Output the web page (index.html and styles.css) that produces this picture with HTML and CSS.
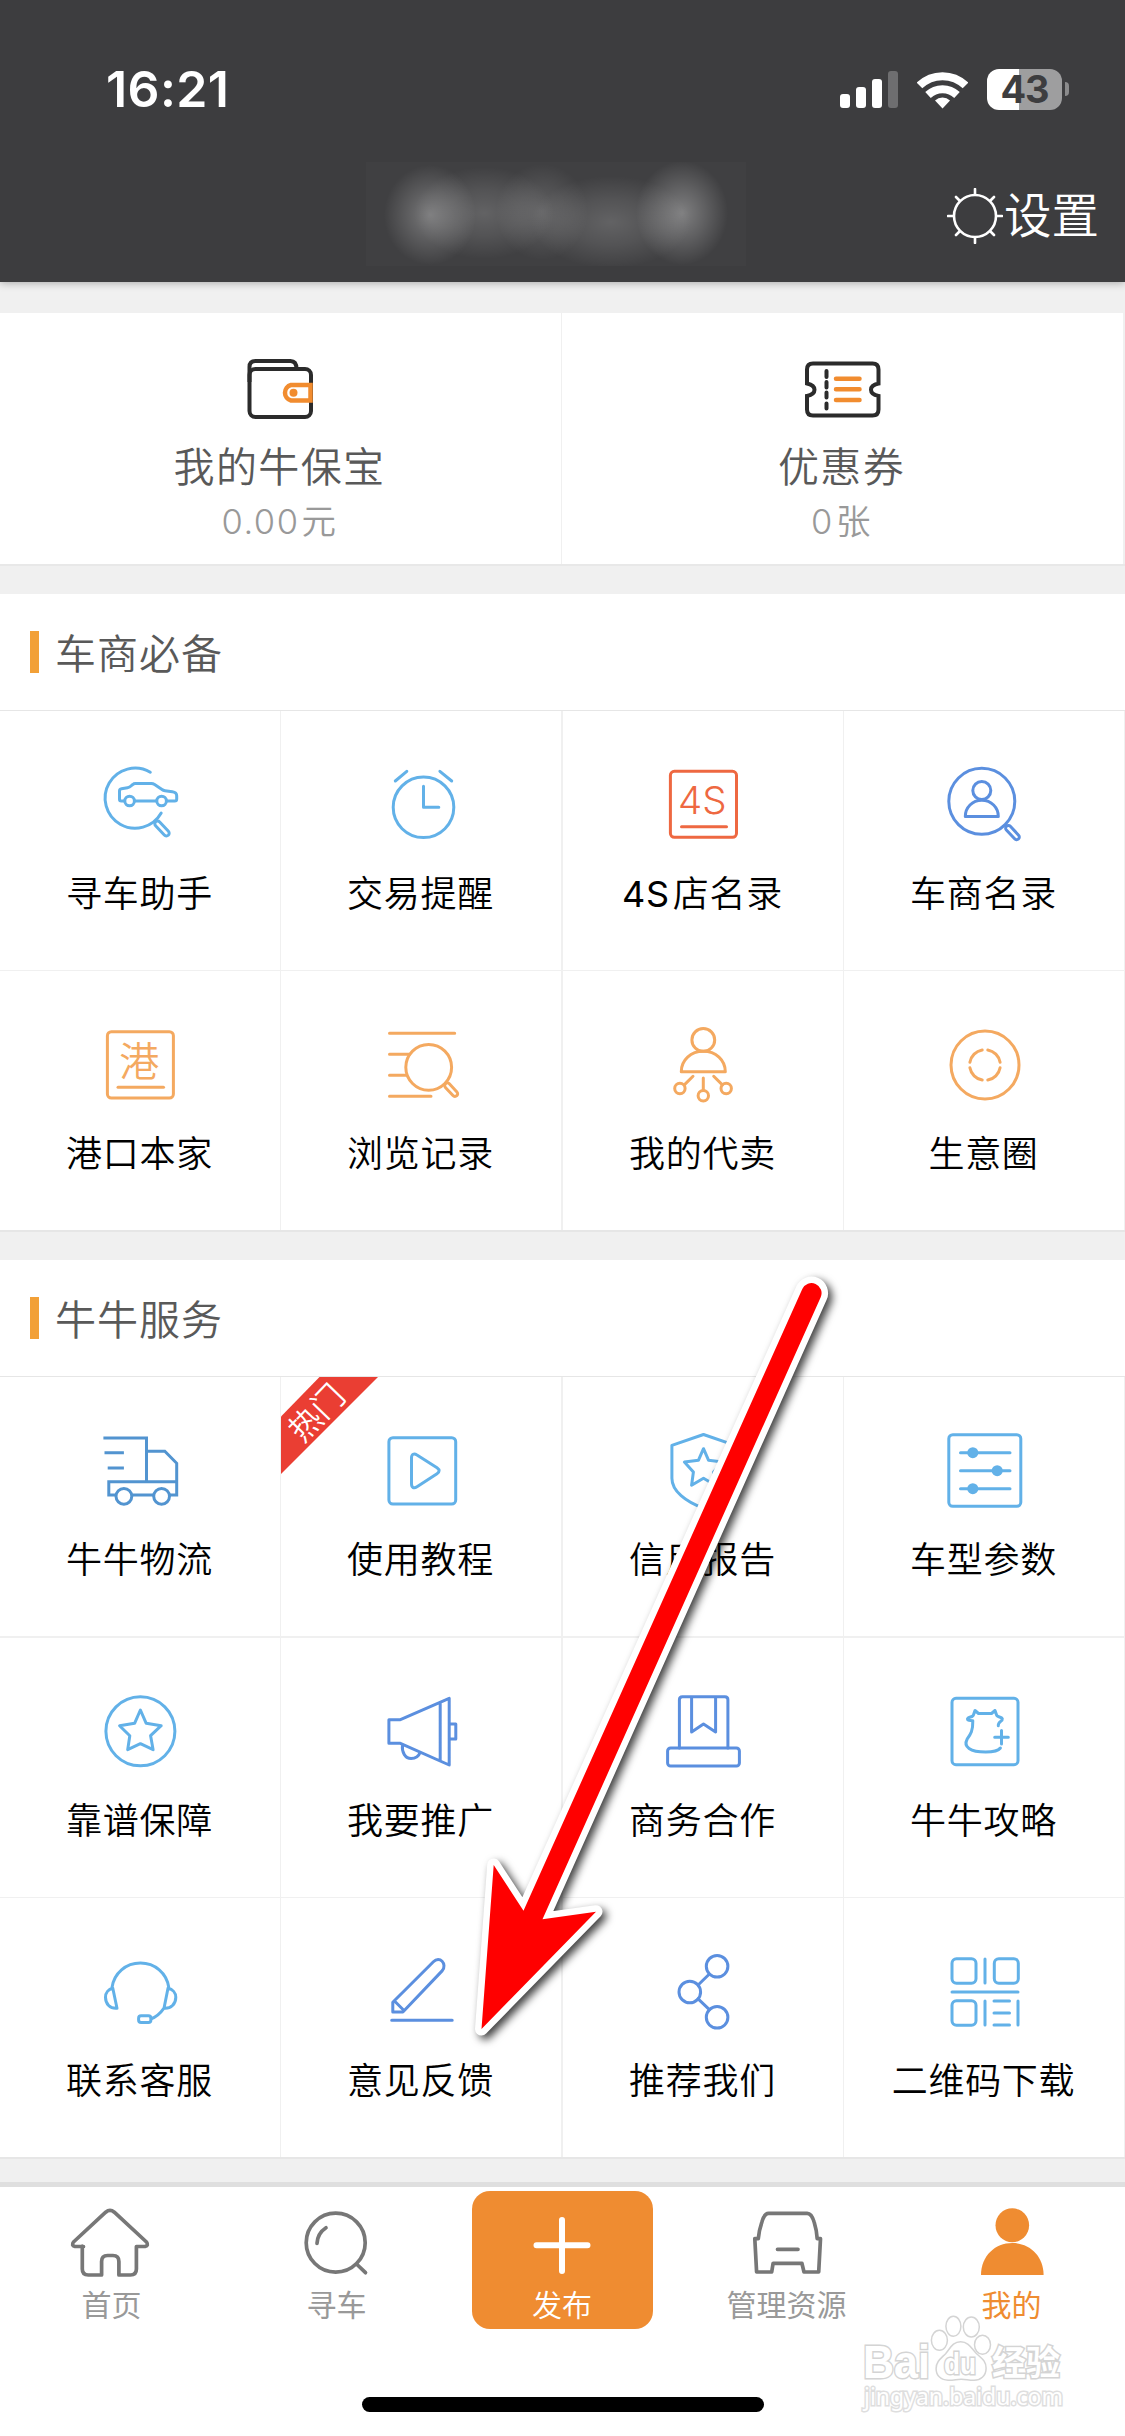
FILE: index.html
```html
<!DOCTYPE html>
<html lang="zh-CN">
<head>
<meta charset="utf-8">
<title>我的</title>
<link rel="stylesheet" href="styles.css">
</head>
<body>
<div class="screen">
  <header class="header">
    <div class="status">
      <div class="time">16:21</div>
      <div class="indicators">
        <svg class="signal" viewBox="840 68 58 41"><g fill="#fff"><rect x="840" y="93" width="10" height="14" rx="3"/><rect x="856" y="86" width="10" height="21" rx="3"/><rect x="872" y="78" width="10" height="29" rx="3"/></g><rect x="888" y="70" width="10" height="37" rx="3" fill="#6e6e70"/></svg>
        <svg class="wifi" viewBox="917 68 51 41"><g fill="none" stroke="#fff" stroke-width="8"><path d="M919.5 84.5a33 33 0 0 1 46 0"/><path d="M928 94a21 21 0 0 1 29 0"/></g><path d="M935 99.5a11 11 0 0 1 15 0L942.500 107.500z" fill="#fff"/></svg>
        <div class="battery"><div class="battery-body">43</div><div class="battery-cap"></div></div>
      </div>
    </div>
    <div class="titlebar">
      <div class="masked-title"></div>
      <div class="settings">
        <svg class="gear" viewBox="947 188 56 56"><g fill="none" stroke="#fff" stroke-width="2.600" stroke-linecap="round"><circle cx="975" cy="216" r="21"/><path d="M975 194v-5M975 238v5M953 216h-5M997 216h5M990.500 200.500l3.500-3.500M959.500 200.500l-3.500-3.500M990.500 231.500l3.500 3.500M959.500 231.500l-3.500 3.500"/></g></svg>
        <span>设置</span>
      </div>
    </div>
  </header>

  <main class="content">
    <section class="assets">
      <div class="asset">
        <svg class="asset-icon" viewBox="241 350 80 80"><g fill="none" stroke="#2b2b2b" stroke-width="4"><path d="M249.500 382V367q0-6 6-6h35q6 0 6 8"/><rect x="249.500" y="369" width="61.500" height="48" rx="6"/></g><path d="M310.500 385H291a8 8 0 0 0 0 15.500h19.500z" fill="#fff" stroke="#f18c2f" stroke-width="4.500"/><circle cx="293.500" cy="392.700" r="4" fill="#f18c2f"/></svg>
        <div class="asset-name">我的牛保宝</div>
        <div class="asset-value"><span>0.00</span>元</div>
      </div>
      <div class="asset">
        <svg class="asset-icon" viewBox="803 350 80 80"><path d="M807 383.500V369.500q0-6 6-6H872.500q6 0 6 6V383.500q-7.500 1.500-7.500 6.200t7.500 6.200V409.500q0 6-6 6H813q-6 0-6-6V396q7.500-1.500 7.500-6.200t-7.500-6.300z" fill="none" stroke="#2b2b2b" stroke-width="4"/><path d="M826.500 371v6M826.500 382v5.500M826.500 392.500v5M826.500 403.500v5" stroke="#2b2b2b" stroke-width="4" stroke-linecap="round"/><path d="M836 378.700h23.500M836 389.300h23.500M836 400h23.500" stroke="#f18c2f" stroke-width="4.500" stroke-linecap="round"/></svg>
        <div class="asset-name">优惠券</div>
        <div class="asset-value"><span>0</span>张</div>
      </div>
    </section>

    <section class="panel">
      <h2 class="panel-title"><span>车商必备</span></h2>
      <div class="grid grid-essentials">
        <div class="cell"><svg class="icon sky" viewBox="90 45 100 100"><path d="M150.300 61.300A30 30 0 1 0 161.200 102"/><path d="M124.500 90h-3.200q-1.800 0-1.800-1.800V80q0-2 2-2.300l6-1q2.200-.4 3.800-2l1.500-1.200q1-1 2.500-1h16q1.800 0 3.300 1l7.400 5q1.200 1 3 1.200l7.300 1q4.400.6 4.400 4V88q0 2-2 2h-7.500M134.800 90h21.600"/><circle cx="129.600" cy="90" r="4.800"/><circle cx="161.600" cy="90" r="4.800"/><rect x="-9.200" y="-2.800" width="18.400" height="5.600" rx="2.800" transform="translate(162 117.500)rotate(47)"/></svg><span class="label">寻车助手</span></div>
        <div class="cell"><svg class="icon sky" viewBox="90 45 100 100"><circle cx="142.500" cy="96.300" r="30.300"/><path d="M142.500 75.300v21h15.300M114.300 70l11.500-9.700M158.900 60.300l11.800 9.700"/></svg><span class="label">交易提醒</span></div>
        <div class="cell"><svg class="icon red" viewBox="90 45 100 100"><rect x="107.400" y="60.300" width="66.100" height="66" rx="4"/><path d="M118.500 115.700h45"/><text class="glyph latin" x="115" y="103" textLength="48.500" lengthAdjust="spacingAndGlyphs">4S</text></svg><span class="label"><span class="label-latin">4S</span>店名录</span></div>
        <div class="cell"><svg class="icon blue" viewBox="90 45 100 100"><circle cx="137.800" cy="90.300" r="33"/><circle cx="137.800" cy="79.500" r="9"/><path d="M121.300 105.500c0-9 7-16.200 16.500-16.200s16.500 7.200 16.500 16.200z"/><rect x="-8.500" y="-2.700" width="17.500" height="5.400" rx="2.700" transform="translate(168.300 121.400)rotate(47)"/></svg><span class="label">车商名录</span></div>
        <div class="cell"><svg class="icon amber" viewBox="90 45 100 100"><rect x="107.400" y="60.700" width="66" height="66.300" rx="4"/><path d="M118 116.300h45.500"/><text class="glyph" x="119.300" y="104.500">港</text></svg><span class="label">港口本家</span></div>
        <div class="cell"><svg class="icon amber" viewBox="90 45 100 100"><path d="M108.500 62.300h65.200M108.500 83.300h20M108.500 104.300h17.200M108.500 125.300h41.500"/><circle cx="147.700" cy="96.300" r="22.900"/><rect x="-8" y="-2.700" width="16.500" height="5.400" rx="2.700" transform="translate(170 118.500)rotate(47)"/></svg><span class="label">浏览记录</span></div>
        <div class="cell"><svg class="icon amber" viewBox="90 45 100 100"><circle cx="140.300" cy="68.900" r="11.400"/><path d="M118.300 100.700c0-11.500 9.500-20.400 22-20.400s22 8.900 22 20.400zM130 105.300l-8.700 8.600M140.300 107v12M150.700 105.300l8.700 8.600"/><circle cx="116.900" cy="117.500" r="5.200"/><circle cx="140.300" cy="124.700" r="5.200"/><circle cx="163.200" cy="117.500" r="5.200"/></svg><span class="label">我的代卖</span></div>
        <div class="cell"><svg class="icon amber" viewBox="90 45 100 100"><circle cx="141" cy="94" r="34"/><path d="M143.800 78.900a15.300 15.300 0 0 1 12.300 12.300M156.100 96.800a15.300 15.300 0 0 1-12.300 12.300M138.200 109.100a15.300 15.300 0 0 1-12.300-12.300M125.900 91.200a15.300 15.300 0 0 1 12.300-12.300"/></svg><span class="label">生意圈</span></div>
      </div>
    </section>

    <section class="panel">
      <h2 class="panel-title"><span>牛牛服务</span></h2>
      <div class="grid grid-services">
        <div class="cell"><svg class="icon steel" viewBox="90 45 100 100"><path d="M103.400 61h43.100v43.700M146.500 74.300h18.300l11.900 12V118H170M176.700 104.700H108.800V118h7.200M132.500 118h20.800M104.500 75.700h19.400M107.700 91h16.200"/><circle cx="123.900" cy="119.300" r="7.900"/><circle cx="161.600" cy="119.300" r="7.900"/></svg><span class="label">牛牛物流</span></div>
        <div class="cell"><div class="ribbon"><span>热门</span></div><svg class="icon sky" viewBox="90 45 100 100"><rect x="107.900" y="60.700" width="66.800" height="66.300" rx="4"/><path d="M130.500 81c0-4 2.500-5 5.500-3l20 12.700c2.800 2 2.800 4 0 6L136 109.800c-3 2-5.500 1-5.500-3z"/></svg><span class="label">使用教程</span></div>
        <div class="cell"><svg class="icon sky" viewBox="90 45 100 100"><path d="M140.500 57.500l31.600 10.800v33c0 13-14 23.500-31.600 30-17.600-6.500-31.600-17-31.600-30v-33zM140.500 71.700l5.100 11.600 14 1.700-9 10 1.800 13.300-11.900-7-11.900 7 1.800-13.300-9-10 14-1.700z"/></svg><span class="label">信用报告</span></div>
        <div class="cell"><svg class="icon sky" viewBox="90 45 100 100"><rect x="104.800" y="57.700" width="72" height="71.600" rx="4"/><path d="M116.500 75.700h49.500M116.500 93.700h49.500M116.500 111.700h49.500"/><g class="dots"><circle cx="128.800" cy="75.700" r="5.500"/><circle cx="153.200" cy="93.700" r="5.500"/><circle cx="128.800" cy="111.700" r="5.500"/></g></svg><span class="label">车型参数</span></div>
        <div class="cell"><svg class="icon sky" viewBox="90 45 100 100"><circle cx="140.400" cy="93.300" r="34.500"/><path d="M140.400 72l5.800 13.300 15 2.400-10.600 10 2.500 14-12.700-6-12.700 6 2.100-14-10.200-10 15-2.400z"/></svg><span class="label">靠谱保障</span></div>
        <div class="cell"><svg class="icon blue" viewBox="90 45 100 100"><path d="M107.900 81.700h11.500l48.800-21.400V127l-48.800-21.700H107.900zM159.200 64.500v58.300M168.200 86h6.600v15h-6.600M121.500 107c-1 7.500 3 13.500 8.600 13.500 4 0 7.500-2 9-6"/></svg><span class="label">我要推广</span></div>
        <div class="cell"><svg class="icon blue" viewBox="90 45 100 100"><path d="M116.400 110V61.700q0-3 3-3h42.500q3 0 3 3V110M128.600 59v35l11.900-8 12.100 8V59"/><rect x="104.600" y="110" width="71.800" height="18" rx="3"/></svg><span class="label">商务合作</span></div>
        <div class="cell"><svg class="icon sky" viewBox="90 45 100 100"><rect x="108" y="60.300" width="66" height="66.400" rx="4"/><path d="M154.300 87.700c-.5-4 4.500-4.500 4-7-1-2-5.500-1.500-5.800-4l-1.500-4.200-3.500 3h-13l-3.500-3-1.500 4.200c-.3 2.500-4.800 2-6 4-.5 1.800 2.500 1.500 5.300 2 .2 10-2 13.300-5.700 18.500-4 7.500 3 12.800 18.600 12.800 8 0 12.500-1 14.700-4M157.500 92.500v13.600M150.700 99.300h13.600"/></svg><span class="label">牛牛攻略</span></div>
        <div class="cell"><svg class="icon sky" viewBox="90 45 100 100"><path d="M112 89.500C114 75 126 65 140.400 65s26.400 10 28.400 24.500M112.800 90.200l4.200 20c-7 .6-11.500-4.200-11.500-11 0-4.500 3-8 7.300-9zM168 90.200l-4 20c7 .6 11.800-4.200 11.800-11 0-4.500-3.300-8-7.800-9zM164 110.200c-3.500 5-8 9-12.800 10.500"/><rect x="138.600" y="117.700" width="12.300" height="6.700" rx="2.500"/></svg><span class="label">联系客服</span></div>
        <div class="cell"><svg class="icon blue" viewBox="90 45 100 100"><path d="M111.800 114v-9.700l40.600-40.600c3-3 6.700-2.500 8.700-.5s3 6.500 0 9.700L121.900 114zM114 103.500l8.500 8.500M110.700 122.300h60.500"/></svg><span class="label">意见反馈</span></div>
        <div class="cell"><svg class="icon blue" viewBox="90 45 100 100"><circle cx="154.100" cy="68.300" r="10.800"/><circle cx="126.800" cy="94" r="10.800"/><circle cx="154.100" cy="119.300" r="10.800"/><path d="M146.400 76l-11.300 11M146.400 111.600l-11.300-10.700"/></svg><span class="label">推荐我们</span></div>
        <div class="cell"><svg class="icon sky" viewBox="90 45 100 100"><rect x="108" y="60.700" width="24" height="24.600" rx="4.500"/><rect x="150.300" y="60.700" width="24" height="24.600" rx="4.500"/><rect x="108" y="102.700" width="24" height="24.600" rx="4.500"/><path d="M141 61v24M108 94h66M141 103v24M150 103h15.500M150 115h15.500M150 127h15.500M174 103v24"/></svg><span class="label">二维码下载</span></div>
      </div>
    </section>
  </main>

  <nav class="tabbar">
    <div class="tab"><svg class="tab-icon" viewBox="68 15 90 80"><path d="M82.300 59V82q0 6 6 6H101.600V74.500q0-6 6-6h5.300q6 0 6 6V88H130.400q6 0 6-6V59.500H145q4-1 1.500-4.500L114.300 25.200q-4.300-3.500-8.600 0L73.500 55q-2.500 3.500 1.500 4.500h8.500"/></svg><span>首页</span></div>
    <div class="tab"><svg class="tab-icon" viewBox="293 15 90 80"><circle cx="335.700" cy="55.700" r="29.500"/><path d="M357 77.500l8.500 8.200M317 56.300q.5-10 9-15.600"/></svg><span>寻车</span></div>
    <div class="tab tab-publish"><svg class="tab-icon plus" viewBox="517.500 15 90 80"><path d="M537 58.300h51M562.500 33v51"/></svg><span>发布</span></div>
    <div class="tab"><svg class="tab-icon" viewBox="743 15 90 80"><path d="M768.500 26.300h38.700q4.500 0 7 9 2.500 8 3 16.400h3.300L818.700 85H804l-2.100-8.700H773.100L771.700 85H756.600L754.800 51.700h3.500q.7-8.400 3.500-16.400 2.500-9 6.700-9zM777.500 62.300h20.500"/></svg><span>管理资源</span></div>
    <div class="tab active"><svg class="tab-icon person" viewBox="968 15 90 80"><ellipse cx="1012.300" cy="38.300" rx="16.800" ry="17"/><path d="M981 88c0-19 14-32 31.300-32s31.300 13 31.300 32z"/></svg><span>我的</span></div>
    <div class="home-indicator"></div>
  </nav>

  <svg class="watermark" viewBox="855 2305 220 125">
    <g class="mark">
      <text class="mark-latin" x="863" y="2378" font-size="47" textLength="67" lengthAdjust="spacingAndGlyphs">Bai</text>
      <ellipse cx="939.400" cy="2340.300" rx="8" ry="10"/><ellipse cx="953.400" cy="2326.300" rx="7.500" ry="10"/><ellipse cx="971.300" cy="2327" rx="8" ry="10"/><ellipse cx="982.500" cy="2344.700" rx="8" ry="9.500"/>
      <path d="M960.600 2341.700c-8 0-10.500 7-15 12-5 5-9.500 8-9.500 15s5 11.500 12 11.500 8-1 13-1 7 1 13 1 12-4 12-12-5-10-10-15c-4.500-5-8-11.500-15.500-11.500z"/>
      <text class="mark-latin" x="944" y="2374" font-size="29" textLength="32" lengthAdjust="spacingAndGlyphs">du</text>
      <text class="mark-cjk" x="992" y="2375" font-size="34">经验</text>
      <text class="mark-url" x="864" y="2405" font-size="23" textLength="199" lengthAdjust="spacingAndGlyphs">jingyan.baidu.com</text>
    </g>
  </svg>

  <svg class="pointer" viewBox="0 0 1125 2436">
    <path d="M481.500 2029L493.700 1865L523.500 1910.700L802.300 1289A10 10 0 0 1 820.700 1297.200L542.500 1919.300L596 1911.700Z"/>
  </svg>
</div>
</body>
</html>
```
FILE: styles.css
```css
* { box-sizing: border-box; }

body {
  margin: 0;
  background: #f0f0f0;
  font-family: Inter, "Noto Sans CJK SC", sans-serif;
}

.screen {
  position: relative;
  display: flex;
  flex-direction: column;
  width: 1125px;
  height: 2436px;
  overflow: hidden;
}

.screen svg { display: block; flex: none; }

/* Header */
.header {
  flex: none;
  height: 282px;
  background: #3d3d3f;
  color: #fff;
  box-shadow: 0 1px 8px rgba(0, 0, 0, .3);
}

.status {
  display: flex;
  justify-content: space-between;
  align-items: center;
  height: 162px;
  padding: 16px 56px 0 106px;
}

.time {
  width: 130px;
  font-size: 50px;
  font-weight: 600;
  line-height: 60px;
  letter-spacing: .4px;
}

.indicators { display: flex; align-items: center; }
.signal { width: 58px; height: 41px; margin-right: 19px; }
.wifi { width: 51px; height: 41px; margin-right: 19px; }
.battery { display: flex; align-items: center; gap: 3px; }

.battery-body {
  width: 75px;
  height: 41px;
  border-radius: 12px;
  background: linear-gradient(90deg, #fff 32px, #9e9e9f 32px);
  color: #3d3d3f;
  font-size: 38px;
  font-weight: 700;
  line-height: 41px;
  letter-spacing: -1px;
  text-align: center;
}

.battery-cap {
  width: 4px;
  height: 14px;
  border-radius: 0 4px 4px 0;
  background: #8b8b8c;
}

.titlebar {
  display: flex;
  justify-content: space-between;
  padding: 0 26px 0 366px;
}

/* The account name is hidden behind a blurred patch */
.masked-title {
  width: 380px;
  height: 104px;
  background:
    radial-gradient(ellipse 46px 50px at 64px 53px, rgba(255, 255, 255, .3), rgba(255, 255, 255, .15) 50%, transparent),
    radial-gradient(ellipse 70px 46px at 118px 51px, rgba(255, 255, 255, .18), rgba(255, 255, 255, .1) 50%, transparent),
    radial-gradient(ellipse 46px 48px at 176px 50px, rgba(255, 255, 255, .17), rgba(255, 255, 255, .09) 50%, transparent),
    radial-gradient(ellipse 80px 46px at 245px 60px, rgba(255, 255, 255, .18), rgba(255, 255, 255, .1) 50%, transparent),
    radial-gradient(ellipse 46px 52px at 316px 51px, rgba(255, 255, 255, .33), rgba(255, 255, 255, .17) 50%, transparent),
    rgba(255, 255, 255, .015);
}

.settings { display: flex; align-items: center; gap: 1px; height: 108px; }
.settings span { font-size: 47.500px; font-weight: 350; line-height: 60px; }
.gear { width: 56px; height: 56px; }

/* Wallet and coupons */
.assets {
  display: grid;
  grid-template-columns: 562px 563px;
  margin-top: 31px;
  border-bottom: 2px solid #e8e8e8;
  background: #fff;
}

.asset {
  display: flex;
  flex-direction: column;
  align-items: center;
  height: 251px;
  padding-top: 37px;
  border-right: 1px solid #f0f0f0;
}

.asset:last-child { border-right-width: 2px; }
.asset-icon { width: 80px; height: 80px; }

.asset-name {
  margin-top: 13px;
  margin-right: 2px;
  color: #595959;
  font-size: 41px;
  font-weight: 350;
  line-height: 48px;
  letter-spacing: 1.400px;
}

.asset-value {
  margin-top: 11px;
  margin-right: 2px;
  color: #999;
  font-size: 34.500px;
  font-weight: 350;
  line-height: 40px;
  letter-spacing: 1.500px;
}

.asset-value span { margin-right: 2px; }

/* Panels */
.panel {
  margin-top: 28px;
  border-bottom: 2px solid #e6e6e6;
  background: #fff;
}

.panel-title {
  display: flex;
  align-items: center;
  gap: 16px;
  height: 117px;
  margin: 0;
  padding-left: 30px;
  border-bottom: 1px solid #e6e6e6;
  color: #595959;
  font-size: 41px;
  font-weight: 350;
  letter-spacing: 1px;
}

.panel-title::before {
  content: "";
  width: 9px;
  height: 42px;
  background: #f2a037;
}

.panel-title span { margin-bottom: 3px; }

.grid {
  display: grid;
  grid-template-columns: 280px 281px 280px 280px;
  column-gap: 1px;
  padding-right: 1px;
  background: #f0f0f0;
}

.grid-essentials { grid-template-rows: 259px 259px; row-gap: 1px; }
.grid-services { grid-template-rows: 261px 260px 259px; }

.cell {
  position: relative;
  display: flex;
  flex-direction: column;
  align-items: center;
  width: 280px;
  height: 259px;
  padding-top: 45px;
  background: #fff;
}

.icon {
  width: 100px;
  height: 100px;
  fill: none;
  stroke: currentColor;
  stroke-width: 3;
  stroke-linecap: round;
  stroke-linejoin: round;
}

.sky { color: #62b1e8; }
.blue { color: #5b8fdf; }
.steel { color: #5294d0; stroke-linecap: butt; stroke-linejoin: miter; }
.red { color: #ee6841; }
.amber { color: #f4a960; }
.dots { fill: currentColor; stroke: none; }

.glyph {
  fill: currentColor;
  stroke: none;
  font-family: "Noto Sans CJK SC", sans-serif;
  font-size: 40px;
  font-weight: 350;
}

.latin { font-family: Inter, sans-serif; font-size: 38.500px; font-weight: 300; }

.label {
  margin-top: 18px;
  margin-right: 1px;
  color: #000;
  font-size: 36px;
  font-weight: 350;
  line-height: 40px;
  letter-spacing: .7px;
  white-space: nowrap;
}

.label-latin { margin-right: 3px; font-weight: 400; }

/* Corner flag lying over the cell */
.ribbon {
  position: absolute;
  top: 0;
  left: 0;
  display: grid;
  place-items: center;
  width: 97px;
  height: 97px;
  background: #ea3e33;
  clip-path: polygon(0 39.500px, 38.500px 0, 97px 0, 0 97px);
}

.ribbon span {
  color: #fff;
  font-size: 32px;
  font-weight: 350;
  line-height: 32px;
  transform: translate(-12px, -13px) rotate(-46deg);
}

/* Tab bar */
.tabbar {
  display: grid;
  grid-template-columns: repeat(5, 225px);
  grid-template-rows: 142px 107px;
  justify-items: center;
  margin-top: 23px;
  border-top: 5px solid #dfdfdf;
  background: #fff;
}

.tab {
  display: flex;
  flex-direction: column;
  align-items: center;
  width: 180px;
  padding-top: 15px;
  color: #999;
  font-size: 30px;
  line-height: 40px;
}

.tab span { margin-top: 3px; margin-right: 2px; }

.tab-icon {
  width: 90px;
  height: 80px;
  fill: none;
  stroke: #777;
  stroke-width: 3.700;
  stroke-linecap: round;
  stroke-linejoin: round;
}

.tab-publish {
  width: 181px;
  height: 138px;
  margin-top: 4px;
  margin-right: 1px;
  padding-top: 11px;
  border-radius: 18px;
  background: #ef8c31;
  color: #fff;
  font-weight: 350;
}

.tab-publish span { margin-right: 0; }

.plus { stroke: #fff; stroke-width: 6; }
.person { fill: #ef8c31; stroke: none; }
.active { color: #ef8c31; }

.home-indicator {
  grid-column: 1 / -1;
  width: 402px;
  height: 15px;
  margin-top: 68px;
  border-radius: 8px;
  background: #000;
}

/* Overlays */
.watermark {
  position: absolute;
  left: 855px;
  top: 2305px;
  width: 220px;
  height: 125px;
}

.mark { fill: #fff; stroke: #d4d4d4; stroke-width: 1.500; }
.mark text { paint-order: stroke; stroke-width: 3; }
.mark-latin { font-family: "Liberation Sans", sans-serif; font-weight: 700; }
.mark-cjk { font-family: "Noto Sans CJK SC", sans-serif; font-weight: 700; }
.mark-url { font-family: "Noto Sans", sans-serif; stroke: #dedede; }

.pointer {
  position: absolute;
  left: 0;
  top: 0;
  width: 1125px;
  height: 2436px;
  fill: #f00;
  stroke: #fff;
  stroke-width: 13;
  stroke-linejoin: round;
  paint-order: stroke;
  filter: drop-shadow(4px 4px 4px rgba(0, 0, 0, .75));
}
```
